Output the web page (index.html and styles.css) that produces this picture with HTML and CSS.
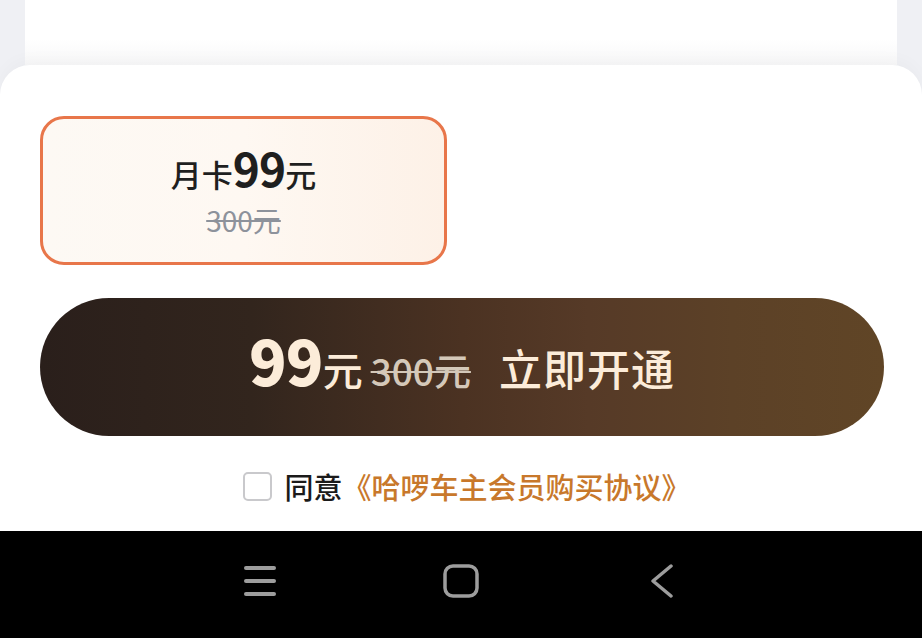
FILE: index.html
```html
<!DOCTYPE html>
<html lang="zh-CN">
<head>
<meta charset="utf-8">
<link rel="stylesheet" href="styles.css">
</head>
<body>
<div class="page">
  <div class="backdrop">
    <div class="backdrop-card"></div>
  </div>
  <div class="sheet">
    <div class="plans">
      <div class="plan plan-active">
        <div class="plan-title"><span class="cjk">月卡</span><span class="num">99</span><span class="cjk">元</span></div>
        <div class="plan-old">300元</div>
      </div>
    </div>
    <button class="buy">
      <span class="buy-num">99</span><span class="buy-unit">元</span>
      <span class="buy-old">300元</span>
      <span class="buy-label">立即开通</span>
    </button>
    <div class="agree">
      <span class="checkbox"></span>
      <span class="agree-text">同意</span><span class="agree-link">《哈啰车主会员购买协议》</span>
    </div>
  </div>
  <div class="navbar">
    <div class="nav-slot">
      <svg width="34" height="32" viewBox="0 0 34 32"><g stroke="#9d9d9d" stroke-width="4" stroke-linecap="round"><line x1="3" y1="3" x2="31" y2="3"/><line x1="3" y1="16" x2="31" y2="16"/><line x1="3" y1="29" x2="31" y2="29"/></g></svg>
    </div>
    <div class="nav-slot">
      <svg width="36" height="34" viewBox="0 0 36 34"><rect x="2" y="2" width="32" height="30" rx="8" fill="none" stroke="#9d9d9d" stroke-width="3.5"/></svg>
    </div>
    <div class="nav-slot">
      <svg width="24" height="34" viewBox="0 0 24 34"><polyline points="21,2 3,17 21,32" fill="none" stroke="#9d9d9d" stroke-width="3.5" stroke-linecap="round" stroke-linejoin="round"/></svg>
    </div>
  </div>
</div>
</body>
</html>
```
FILE: styles.css
```css
* { box-sizing: border-box; }
html, body { margin: 0; padding: 0; }
body {
  width: 922px;
  height: 638px;
  overflow: hidden;
  background: #eff0f4;
  font-family: "Noto Sans CJK SC", "Noto Sans", sans-serif;
}
.page {
  display: flex;
  flex-direction: column;
  height: 638px;
}
.backdrop {
  height: 65px;
  padding: 0 25px;
  flex: none;
}
.backdrop-card {
  height: 100%;
  background: linear-gradient(180deg, #ffffff 0%, #ffffff 60%, #f7f7f8 100%);
}
.sheet {
  flex: 1;
  background: #ffffff;
  border-radius: 30px 30px 0 0;
  padding: 51px 38px 0 40px;
  display: flex;
  flex-direction: column;
  box-shadow: 0 -6px 16px rgba(0, 0, 0, 0.025);
}
.plans {
  display: flex;
}
.plan {
  width: 407px;
  height: 149px;
  border-radius: 24px;
  display: flex;
  flex-direction: column;
  align-items: center;
  justify-content: center;
  gap: 14px;
  padding-bottom: 2px;
}
.plan-active {
  border: 3.5px solid #e8764a;
  background: linear-gradient(90deg, #fdf9f4 0%, #fef8f2 50%, #fdf1e7 100%);
}
.plan-title {
  display: flex;
  align-items: baseline;
  color: #1f1f1f;
  line-height: 1.05;
}
.plan-title .cjk {
  font-size: 31px;
  font-weight: 500;
}
.plan-title .num {
  font-size: 46px;
  font-weight: 700;
  letter-spacing: -1px;
}
.plan-old {
  font-size: 28px;
  color: #8d929b;
  text-decoration: line-through;
  text-decoration-thickness: 2px;
  line-height: 1.1;
}
.buy {
  margin-top: 33px;
  height: 138px;
  border: none;
  border-radius: 69px;
  background: linear-gradient(90deg, #2a1f1b 0%, #32251d 25%, #4b3222 50%, #563a27 65%, #5c4127 82%, #604526 100%);
  display: flex;
  align-items: baseline;
  justify-content: center;
  padding: 30px 0 0 0;
  font-family: "Noto Sans CJK SC", "Noto Sans", sans-serif;
  color: #fcecd9;
  cursor: pointer;
}
.buy-num {
  font-size: 62px;
  font-weight: 900;
  line-height: 1;
  letter-spacing: -1px;
}
.buy-unit {
  font-size: 40px;
  font-weight: 500;
  line-height: 1;
}
.buy-old {
  font-size: 37px;
  font-weight: 500;
  line-height: 1;
  color: #d4c8b9;
  text-decoration: line-through;
  text-decoration-thickness: 2px;
  margin-left: 8px;
}
.buy-label {
  font-size: 43px;
  font-weight: 500;
  line-height: 1;
  margin-left: 28px;
  letter-spacing: 1px;
}
.agree {
  margin-top: 32px;
  display: flex;
  align-items: center;
  justify-content: center;
  padding-left: 10px;
}
.checkbox {
  width: 29px;
  height: 29px;
  border: 2px solid #c9c9cc;
  border-radius: 5px;
  margin-right: 12px;
}
.agree-text {
  font-size: 29px;
  font-weight: 500;
  color: #1a1a1a;
  line-height: 1.3;
}
.agree-link {
  font-size: 29px;
  font-weight: 500;
  color: #c8782b;
  line-height: 1.3;
}
.navbar {
  height: 107px;
  flex: none;
  background: #000000;
  display: flex;
  align-items: center;
  justify-content: center;
  gap: 121px;
  padding-bottom: 7px;
}
.nav-slot {
  width: 80px;
  display: flex;
  justify-content: center;
  align-items: center;
}
```
